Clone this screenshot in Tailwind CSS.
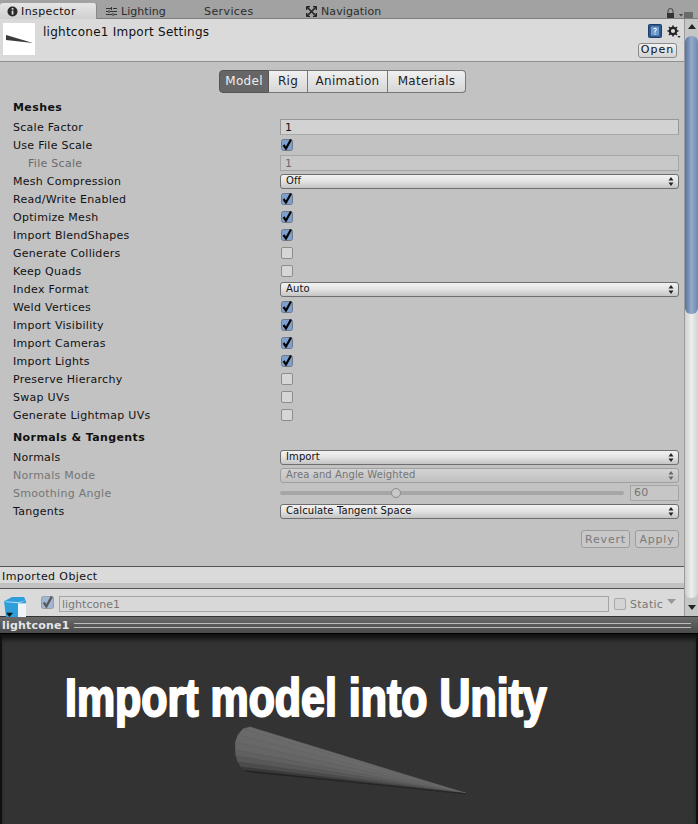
<!DOCTYPE html>
<html lang="en">
<head>
    <meta charset="UTF-8" />
    <title>Inspector</title>
    <script src="https://cdn.jsdelivr.net/npm/@tailwindcss/browser@4"></script>
</head>
<body class="w-[698px] h-[824px] overflow-hidden bg-[#c2c2c2] text-[11px] text-[#111] font-['DejaVu_Sans',sans-serif] tracking-[0.28px]">
    <svg class="hidden">
        <symbol id="check" viewBox="0 0 12 12">
            <rect x="0.5" y="0.5" width="11" height="11" rx="2" fill="#7f9fce" stroke="#6d7a8c" />
            <path d="M2.5 6 L5 9.5 L10 0.5" fill="none" stroke="#050505" stroke-width="2.2" />
        </symbol>
        <symbol id="updown" viewBox="0 0 6 9">
            <path d="M3 0 L5.5 3.5 H0.5 Z M3 9 L0.5 5.5 H5.5 Z" fill="currentColor" />
        </symbol>
    </svg>

    <!-- tab bar -->
    <div class="h-[19px] pt-[3px] flex bg-[#a2a2a2] relative border-b border-[#7d7d7d]">
        <div class="w-[97px] h-[16px] pl-[7px] flex items-center gap-[3px] bg-gradient-to-b from-[#e6e6e6] to-[#cfcfcf] rounded-t-[3px] border-r border-[#8a8a8a] tracking-[0.4px]">
            <svg class="mt-[1px]" width="11" height="11" viewBox="0 0 11 11"><circle cx="5.5" cy="5.5" r="5" fill="#2a2a2a" /><rect x="4.7" y="2" width="1.7" height="1.7" fill="#ddd" /><rect x="4.7" y="4.6" width="1.7" height="4" fill="#ddd" /></svg>
            <span class="pt-[3px]">Inspector</span>
        </div>
        <div class="w-[107px] pl-[9px] flex items-center gap-[4px] text-[#2d2d2d] tracking-[0.05px]">
            <svg class="mt-[1px]" width="11" height="11" viewBox="0 0 11 11" fill="none" stroke="#333"><path d="M0 2.5 H5 M7 2.5 H11 M0 5.5 H2 M4 5.5 H11 M0 8.5 H6 M8 8.5 H11 M5.5 1 V4 M3 4 V7 M7 7 V10" /></svg>
            <span class="pt-[3px]">Lighting</span>
        </div>
        <div class="w-[102px] pt-[3px] flex items-center text-[#2d2d2d] tracking-[0.4px]">Services</div>
        <div class="flex items-center gap-[4px] text-[#2d2d2d] tracking-[0.1px]">
            <svg class="mt-[1px]" width="11" height="11" viewBox="0 0 11 11" fill="none" stroke="#222" stroke-width="1.6"><path d="M1 1 L10 10 M10 1 L1 10" /><path d="M0.5 0.5 H4 M0.5 0.5 V4 M10.5 0.5 H7 M10.5 0.5 V4 M0.5 10.5 H4 M0.5 10.5 V7 M10.5 10.5 H7 M10.5 10.5 V7" /></svg>
            <span class="pt-[3px]">Navigation</span>
        </div>
        <svg class="absolute left-[666px] top-[8px]" width="9" height="10" viewBox="0 0 9 10"><path d="M2 5 V3 A2.5 2.5 0 0 1 7 3 V5" fill="none" stroke="#444" /><rect x="1" y="5" width="7" height="5" fill="#333" /></svg>
        <svg class="absolute left-[679px] top-[12px]" width="16" height="6" viewBox="0 0 16 6"><path d="M0 2 H4 L2 4.5 Z" fill="#444" /><path d="M5 1 H14 M5 3 H14 M5 5 H14" stroke="#333" /></svg>
    </div>

    <div class="flex">
        <!-- main column -->
        <div class="w-[684px]">
            <!-- header -->
            <div class="h-[43px] bg-[#dadada] border-b border-[#8f8f8f] flex relative">
                <div class="ml-[3px] mt-[4px] w-[32px] h-[32px] bg-white">
                    <svg width="32" height="32" viewBox="0 0 32 32"><path d="M3 12 L3 17 L30 20 Z" fill="#3a3a3a" /></svg>
                </div>
                <div class="ml-[8px] mt-[4px] text-[12px] tracking-[0.25px]">lightcone1 Import Settings</div>
                <svg class="absolute left-[648px] top-[5px]" width="14" height="14" viewBox="0 0 14 14"><rect x="0.5" y="0.5" width="13" height="13" rx="1" fill="#2f5a8f" stroke="#1f3d66" /><rect x="3" y="2.5" width="8" height="9" fill="#6f9acb" /><path d="M5.5 5 Q7 3.5 8.5 5 Q8.5 6.5 7 7 V8.5 M7 9.5 V10.5" fill="none" stroke="#fff" /></svg>
                <svg class="absolute left-[667px] top-[6px]" width="14" height="14" viewBox="0 0 14 14"><circle cx="6" cy="6" r="3.2" fill="none" stroke="#222" stroke-width="2.2" /><path d="M6 0.5 V2.5 M6 9.5 V11.5 M0.5 6 H2.5 M9.5 6 H11.5 M2 2 L3.5 3.5 M8.5 8.5 L10 10 M10 2 L8.5 3.5 M3.5 8.5 L2 10" stroke="#222" stroke-width="1.6" /><path d="M10.5 11 H13.5 L12 13 Z" fill="#222" /></svg>
                <div class="absolute left-[638px] top-[24px] w-[39px] h-[15px] flex items-center justify-center bg-gradient-to-b from-[#f2f2f2] to-[#d2d2d2] border border-[#8a8a8a] rounded-[3px] tracking-[1px]">Open</div>
            </div>

            <!-- model tabs -->
            <div class="h-[23px] mt-[8px] flex justify-center pl-[1px] text-[12px] tracking-[0.3px]">
                <div class="w-[50px] pb-[2px] flex items-center justify-center bg-[#666] text-[#eee] border border-[#555] rounded-l-[4px]">Model</div>
                <div class="w-[39px] pb-[2px] flex items-center justify-center bg-gradient-to-b from-[#f0f0f0] to-[#d6d6d6] border-y border-r border-[#777] text-[#222]">Rig</div>
                <div class="w-[80px] pb-[2px] flex items-center justify-center bg-gradient-to-b from-[#f0f0f0] to-[#d6d6d6] border-y border-r border-[#777] text-[#222]">Animation</div>
                <div class="w-[78px] pb-[2px] flex items-center justify-center bg-gradient-to-b from-[#f0f0f0] to-[#d6d6d6] border-y border-r border-[#777] rounded-r-[4px] text-[#222]">Materials</div>
            </div>

            <div class="pl-[13px] pr-[5px]">
                <div class="mt-[7px] h-[18px] pb-[2px] flex items-center font-bold tracking-[0.4px]">Meshes</div>
                <div class="flex flex-col">
                    <div class="h-[18px] flex items-center"><span class="w-[267px] pt-[2px]">Scale Factor</span><div class="w-[399px] h-[16px] pl-[4px] pt-[2px] flex items-center bg-[#d2d2d2] border border-[#979797] border-b-[#a8a8a8] text-[#111]">1</div></div>
                    <div class="h-[18px] flex items-center"><span class="w-[268px] pt-[2px]">Use File Scale</span><svg width="12" height="12"><use href="#check" /></svg></div>
                    <div class="h-[18px] flex items-center text-[#6b6b6b]"><span class="w-[252px] ml-[15px] pt-[2px]">File Scale</span><div class="w-[399px] h-[16px] pl-[4px] pt-[2px] flex items-center bg-[#c8c8c8] border border-[#a5a5a5]">1</div></div>
                    <div class="h-[18px] flex items-center"><span class="w-[267px] pt-[2px]">Mesh Compression</span><div class="w-[399px] h-[15px] pl-[5px] pr-[4px] flex items-center justify-between bg-gradient-to-b from-[#f2f2f2] via-[#e2e2e2] to-[#c4c4c4] border border-[#6f6f6f] rounded-[3px] text-[10px] tracking-[0.1px]"><span class="pb-[2px]">Off</span><svg class="text-[#222]" width="6" height="9"><use href="#updown" /></svg></div></div>
                    <div class="h-[18px] flex items-center"><span class="w-[268px] pt-[2px]">Read/Write Enabled</span><svg width="12" height="12"><use href="#check" /></svg></div>
                    <div class="h-[18px] flex items-center"><span class="w-[268px] pt-[2px]">Optimize Mesh</span><svg width="12" height="12"><use href="#check" /></svg></div>
                    <div class="h-[18px] flex items-center"><span class="w-[268px] pt-[2px]">Import BlendShapes</span><svg width="12" height="12"><use href="#check" /></svg></div>
                    <div class="h-[18px] flex items-center"><span class="w-[268px] pt-[2px]">Generate Colliders</span><div class="w-[12px] h-[12px] rounded-[2px] border border-[#8d8d8d] bg-[#d6d6d6]"></div></div>
                    <div class="h-[18px] flex items-center"><span class="w-[268px] pt-[2px]">Keep Quads</span><div class="w-[12px] h-[12px] rounded-[2px] border border-[#8d8d8d] bg-[#d6d6d6]"></div></div>
                    <div class="h-[18px] flex items-center"><span class="w-[267px] pt-[2px]">Index Format</span><div class="w-[399px] h-[15px] pl-[5px] pr-[4px] flex items-center justify-between bg-gradient-to-b from-[#f2f2f2] via-[#e2e2e2] to-[#c4c4c4] border border-[#6f6f6f] rounded-[3px] text-[10px] tracking-[0.1px]"><span class="pb-[2px]">Auto</span><svg class="text-[#222]" width="6" height="9"><use href="#updown" /></svg></div></div>
                    <div class="h-[18px] flex items-center"><span class="w-[268px] pt-[2px]">Weld Vertices</span><svg width="12" height="12"><use href="#check" /></svg></div>
                    <div class="h-[18px] flex items-center"><span class="w-[268px] pt-[2px]">Import Visibility</span><svg width="12" height="12"><use href="#check" /></svg></div>
                    <div class="h-[18px] flex items-center"><span class="w-[268px] pt-[2px]">Import Cameras</span><svg width="12" height="12"><use href="#check" /></svg></div>
                    <div class="h-[18px] flex items-center"><span class="w-[268px] pt-[2px]">Import Lights</span><svg width="12" height="12"><use href="#check" /></svg></div>
                    <div class="h-[18px] flex items-center"><span class="w-[268px] pt-[2px]">Preserve Hierarchy</span><div class="w-[12px] h-[12px] rounded-[2px] border border-[#8d8d8d] bg-[#d6d6d6]"></div></div>
                    <div class="h-[18px] flex items-center"><span class="w-[268px] pt-[2px]">Swap UVs</span><div class="w-[12px] h-[12px] rounded-[2px] border border-[#8d8d8d] bg-[#d6d6d6]"></div></div>
                    <div class="h-[18px] flex items-center"><span class="w-[268px] pt-[2px]">Generate Lightmap UVs</span><div class="w-[12px] h-[12px] rounded-[2px] border border-[#8d8d8d] bg-[#d6d6d6]"></div></div>
                </div>

                <div class="mt-[4px] h-[18px] pt-[2px] flex items-center font-bold tracking-[0.4px]">Normals &amp; Tangents</div>
                <div class="mt-[2px] flex flex-col">
                    <div class="h-[18px] flex items-center"><span class="w-[267px] pt-[2px]">Normals</span><div class="w-[399px] h-[15px] pl-[5px] pr-[4px] flex items-center justify-between bg-gradient-to-b from-[#f2f2f2] via-[#e2e2e2] to-[#c4c4c4] border border-[#6f6f6f] rounded-[3px] text-[10px] tracking-[0.1px]"><span class="pb-[2px]">Import</span><svg class="text-[#222]" width="6" height="9"><use href="#updown" /></svg></div></div>
                    <div class="h-[18px] flex items-center text-[#757575]"><span class="w-[267px] pt-[2px]">Normals Mode</span><div class="w-[399px] h-[15px] pl-[5px] pr-[4px] flex items-center justify-between bg-gradient-to-b from-[#d4d4d4] to-[#c0c0c0] border border-[#a0a0a0] rounded-[3px] text-[10px] tracking-[0.1px]"><span class="pb-[2px]">Area and Angle Weighted</span><svg class="text-[#666]" width="6" height="9"><use href="#updown" /></svg></div></div>
                    <div class="h-[18px] flex items-center text-[#757575]">
                        <span class="w-[267px] pt-[2px]">Smoothing Angle</span>
                        <div class="relative w-[344px] h-[4px] rounded-full bg-[#a6a6a6]">
                            <div class="absolute left-[111px] top-[-3px] w-[10px] h-[10px] rounded-full bg-[#c8c8c8] border border-[#8a8a8a]"></div>
                        </div>
                        <div class="ml-[6px] w-[49px] h-[16px] pl-[3px] flex items-center bg-[#c6c6c6] border border-[#a5a5a5]">60</div>
                    </div>
                    <div class="h-[18px] flex items-center"><span class="w-[267px] pt-[2px]">Tangents</span><div class="w-[399px] h-[15px] pl-[5px] pr-[4px] flex items-center justify-between bg-gradient-to-b from-[#f2f2f2] via-[#e2e2e2] to-[#c4c4c4] border border-[#6f6f6f] rounded-[3px] text-[10px] tracking-[0.1px]"><span class="pb-[2px]">Calculate Tangent Space</span><svg class="text-[#222]" width="6" height="9"><use href="#updown" /></svg></div></div>
                </div>
                <div class="mt-[10px] flex justify-end gap-[5px] text-[#7a7a7a] tracking-[0.8px]">
                    <div class="w-[49px] h-[18px] pt-[2px] flex items-center justify-center border border-[#9c9c9c] rounded-[3px] bg-[#c8c8c8]">Revert</div>
                    <div class="w-[44px] h-[18px] pt-[2px] flex items-center justify-center border border-[#9c9c9c] rounded-[3px] bg-[#c8c8c8]">Apply</div>
                </div>
            </div>

            <!-- imported object -->
            <div class="mt-[18px] h-[17px] pl-[2px] pt-[5px] flex items-center bg-[#dadada] border-t border-[#555] tracking-[0.4px]">Imported Object</div>
            <div class="h-[5px]"></div>
            <div class="h-[28px] relative flex items-center bg-[#dadada] border-t border-[#555]">
                <svg class="absolute left-[3px] top-[7px]" width="24" height="21" viewBox="0 0 24 20" preserveAspectRatio="none"><path d="M1 5 L9 1 H21 L23 5 V20 H3 Z" fill="#2f9fdc" /><path d="M1 5 L16 6 L23 4 L16 7 V20 H17 L16 7 L4 6 Z" fill="#bfe6f7" /><rect x="15" y="7" width="8" height="13" fill="#eef4f7" /><path d="M3 16 H10 L6.5 20 Z" fill="#111" /></svg>
                <svg class="absolute left-[41px] top-[7px] opacity-60" width="13" height="13"><use href="#check" /></svg>
                <div class="absolute left-[59px] top-[7px] w-[550px] h-[16px] pl-[2px] pt-[2px] flex items-center text-[#777] border border-[#a5a5a5] bg-[#d8d8d8] tracking-[0px]">lightcone1</div>
                <div class="absolute left-[614px] top-[9px] w-[12px] h-[12px] rounded-[2px] border border-[#a8a8a8] bg-[#d4d4d4]"></div>
                <span class="absolute left-[630px] top-[8px] text-[#777]">Static</span>
                <svg class="absolute left-[667px] top-[10px]" width="9" height="6"><path d="M0 0 H9 L4.5 5 Z" fill="#999" /></svg>
            </div>
        </div>

        <!-- scrollbar -->
        <div class="w-[14px] h-[597px] relative bg-[#c6c6c6] border-l border-[#9a9a9a]">
            <svg class="absolute left-[3px] top-[5px]" width="8" height="6"><path d="M4 0 L8 5 H0 Z" fill="#222" /></svg>
            <div class="absolute left-0 top-[280px] w-[13px] h-[299px] rounded-b-[6px] bg-gradient-to-r from-[#cfcfcf] via-[#eeeeee] to-[#d2d2d2]"></div>
            <div class="absolute left-0 top-[17px] w-[13px] h-[278px] rounded-[6px] bg-gradient-to-r from-[#5a7299] via-[#93abcb] to-[#6f87ab]"></div>
            <svg class="absolute left-[3px] top-[586px]" width="8" height="6"><path d="M0 0 H8 L4 5 Z" fill="#222" /></svg>
        </div>
    </div>

    <!-- preview title -->
    <div class="h-[17px] pl-[2px] flex items-center gap-[4px] bg-gradient-to-b from-[#6a6a6a] to-[#4a4a4a] border-t border-[#333] text-[#e6e6e6] font-bold">
        <span class="pt-[2px] tracking-[0.2px]">lightcone1</span>
        <div class="w-[617px] h-[5px] border-y border-[#bdbdbd]"></div>
    </div>

    <!-- preview -->
    <div class="h-[191px] border-t border-black bg-[#333] relative overflow-hidden shadow-[inset_0_5px_5px_#111,inset_2px_0_0_#111,inset_-2px_0_0_#111]">
        <div class="absolute left-[65px] top-[37px] text-[53px] leading-none whitespace-nowrap origin-left scale-x-[0.81] font-['Liberation_Sans',sans-serif] font-bold text-white tracking-[0px] [-webkit-text-stroke:2px_white] [text-shadow:-1px_0_#5ab0ff,1px_0_#e0903c]">Import model into Unity</div>
        <svg class="absolute left-[233px] top-[92px]" width="240" height="72" viewBox="0 0 240 72" stroke-width="0.6">
            <path d="M235 68 L17 1 L10 3 Z" fill="#6b6b6b" stroke="#6b6b6b" />
            <path d="M235 68 L10 3 L5 9 Z" fill="#6a6a6a" stroke="#6a6a6a" />
            <path d="M235 68 L5 9 L2.5 16 Z" fill="#686868" stroke="#686868" />
            <path d="M235 68 L2.5 16 L2.5 24 Z" fill="#656565" stroke="#656565" />
            <path d="M235 68 L2.5 24 L3 30 Z" fill="#606060" stroke="#606060" />
            <path d="M235 68 L3 30 L5 36 Z" fill="#585858" stroke="#585858" />
            <path d="M235 68 L5 36 L8 41 Z" fill="#4c4c4c" stroke="#4c4c4c" />
            <path d="M235 68 L8 41 L12 44.5 Z" fill="#3a3a3a" stroke="#3a3a3a" />
            <path d="M235 68 L12 44.5 L17 46 Z" fill="#242424" stroke="#242424" />
        </svg>
    </div>
</body>
</html>
